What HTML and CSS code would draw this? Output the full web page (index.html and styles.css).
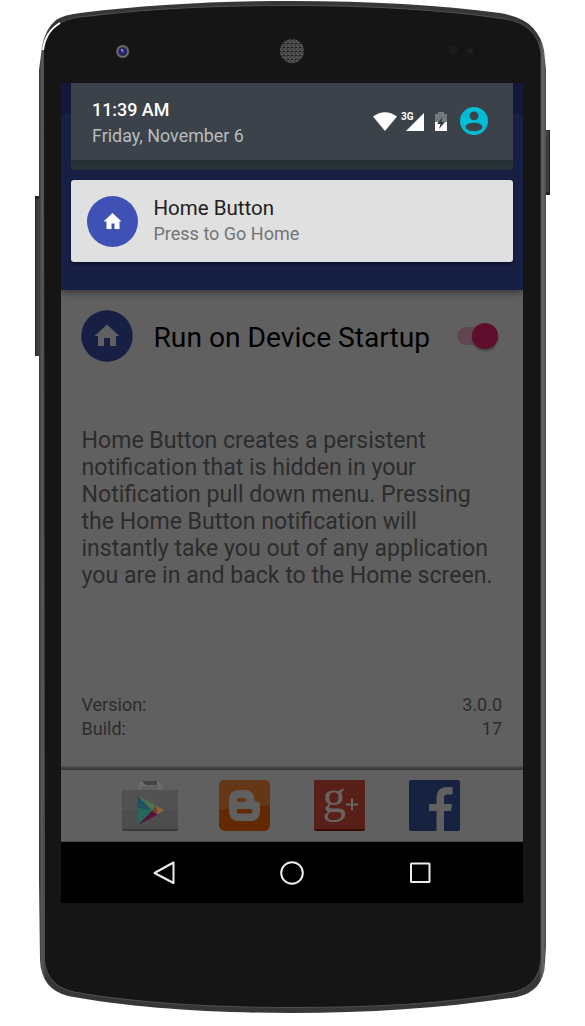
FILE: index.html
```html
<!DOCTYPE html>
<html lang="en">
<head>
<meta charset="utf-8">
<title>Home Button</title>
<link rel="stylesheet" href="styles.css">
</head>
<body>
<div class="phone">
  <svg class="shell" viewBox="0 0 585 1026" aria-hidden="true">
    <defs>
      <linearGradient id="rim" x1="0" x2="1" y1="0" y2="0"><stop offset="0" stop-color="#343638"/><stop offset=".006" stop-color="#58595b"/><stop offset=".014" stop-color="#353739"/><stop offset=".986" stop-color="#353739"/><stop offset=".994" stop-color="#666"/><stop offset="1" stop-color="#4a4a4a"/></linearGradient>
      <pattern id="mesh" width="4" height="4" patternUnits="userSpaceOnUse"><path d="M0 0H4M0 2H4M0 0V2M2 2V4" stroke="#77777a" stroke-width=".8"/></pattern>
      <radialGradient id="lens"><stop offset="0" stop-color="#5262c8"/><stop offset=".3" stop-color="#22227c"/><stop offset=".55" stop-color="#292944"/><stop offset=".75" stop-color="#77777c"/><stop offset="1" stop-color="#28282b"/></radialGradient>
    </defs>
    <path fill="#3b3d3f" d="M35 196h6v160h-6zM544 130h6v65h-6z"/>
    <path fill="#202224" d="M35 196h1v160h-1zM549 130h1v65h-1zM35 196h6v3h-6zM544 192h6v3h-6z"/>
    <path fill="url(#rim)" d="M39 70L42 47Q45 29 56 20Q63 15 80 13C145 5 216 1 292 1C370 1 440 5 500 13Q524 17 533 28Q542 38 544 50L546 70V947L545 963Q544 991 517 997C445 1008 370 1013 292 1013C214 1013 132 1008 68 996Q41 989 40 960L39 880Z"/>
    <path fill="#151515" stroke="#58595a" stroke-width=".8" d="M43.500 70V52Q46 29 62 22Q72 17 90 16C155 8 220 5.500 292 5.500C370 5.500 445 10 505 19Q537 24 541 53V958Q540 985 514 992C445 1004 370 1007.500 292 1007.500C215 1007.500 136 1003 74 992Q47 986 44.500 961Z"/>
    <path d="M43 50Q45 32 60 23" fill="none" stroke="#fff" stroke-width="2"/>
    <circle cx="122.700" cy="51.500" r="7" fill="url(#lens)"/><circle cx="122" cy="50" r="1" fill="#9cafff"/>
    <circle cx="292" cy="51" r="12.500" fill="#202021"/><circle cx="292" cy="51" r="12" fill="url(#mesh)"/>
    <circle cx="453.500" cy="50" r="5" fill="#1d1b1a"/><circle cx="470.500" cy="50" r="3" fill="#211d1a"/><circle cx="454" cy="51" r=".8" fill="#482516"/><circle cx="470.500" cy="51" r=".8" fill="#482516"/>
  </svg>

  <main class="screen">
    <div class="app-bar"></div>
    <section class="content">
      <div class="startup">
        <svg class="home-badge" viewBox="0 0 52 52"><circle cx="26" cy="26" r="25.800" fill="#181f45"/><path fill="#606060" d="M26 14.500L38.500 26H35v10h-6v-8h-6v8h-6V26h-3.500z"/></svg>
        <h1>Run on Device Startup</h1>
        <span class="toggle"><span class="thumb"></span></span>
      </div>
      <p class="description">Home Button creates a persistent<br>notification that is hidden in your<br>Notification pull down menu. Pressing<br>the Home Button notification will<br>instantly take you out of any application<br>you are in and back to the Home screen.</p>
      <dl class="about">
        <div><dt>Version:</dt><dd>3.0.0</dd></div>
        <div><dt>Build:</dt><dd>17</dd></div>
      </dl>
    </section>
    <div class="divider"></div>
    <footer class="links">
      <svg class="play" viewBox="0 0 56 52">
        <path fill="#6a6a6a" d="M16 10V5l4-4h16l4 4v5h-4V6H20v4z"/><path fill="#444" d="M20 1h15v4H24z"/>
        <path fill="#525252" d="M0 10h56v39q0 2-2 2H2q-2 0-2-2z"/><path fill="#4d4d4d" d="M0 30h56v19H0z"/><path fill="#393939" d="M0 49h56q0 2-2 2H2q-2 0-2-2z"/>
        <path fill="#1d5260" d="M15.500 15.500L31 30l-15.500 4z"/><path fill="#28685c" d="M15.500 28v17L31 30z"/><path fill="#50704e" d="M15.500 15.500L35 26l-4.500 5z"/><path fill="#8a6939" d="M35 26l7 4.500-7 4-4.500-4z"/><path fill="#71413a" d="M34 25.500l2 8-5.500-3z"/><path fill="#551437" d="M16 45l14.500-14.500 5 4z"/>
      </svg>
      <svg class="tile" viewBox="0 0 51 51"><rect width="51" height="51" rx="6" fill="#632900"/><path fill="#643817" d="M6 0h39q6 0 6 6v20Q24 25 0 30V6q0-6 6-6"/><path fill="#606060" fill-rule="evenodd" d="M21 10h5q9 0 9.500 10 .5 2 3 2 2.500 0 2.500 3v6q0 10-10 10H20q-10 0-10-10V20q0-10 11-10m-1 8q-2.500 0-2.500 2t2.500 2h5q2.500 0 2.500-2T25 18zm0 11q-2.500 0-2.500 2.200T20 33.500h11q2.500 0 2.500-2.200T31 29z"/></svg>
      <svg class="tile" viewBox="0 0 51 51"><rect width="51" height="51" rx="2" fill="#390b07"/><path fill="#591f19" d="M2 0h47q2 0 2 2v46q0 1-2 1H2q-2 0-2-1V2q0-2 2-2"/>
        <text class="google-g" x="8.500" y="32">g</text><path stroke="#686462" stroke-width="2" d="M32 24.500h12M38 18.500v12"/></svg>
      <svg class="tile" viewBox="0 0 51 51"><rect width="51" height="51" rx="2" fill="#172240"/><path fill="#606060" d="M27.500 51V31H20v-7h7.500v-6C27.500 10.500 32 7 38 7h5.500v7.500H39c-3 0-4 1-4 4V24h8l-1 7h-7v20z"/></svg>
    </footer>
    <nav class="navigation">
      <svg viewBox="0 0 26 26"><path d="M22.500 2.500v20.500L3.500 13z"/></svg>
      <svg viewBox="0 0 26 26"><circle cx="13" cy="13" r="10.800"/></svg>
      <svg viewBox="0 0 26 26"><rect x="4" y="3.500" width="18.500" height="18.500" rx=".5"/></svg>
    </nav>

    <aside class="shade">
      <header class="status">
        <div class="clock"><strong>11:39 AM</strong><span>Friday, November 6</span></div>
        <svg class="wifi" viewBox="0 0 24 19"><path fill="#fff" d="M0 4.500Q12-4 24 4.500L12 19z"/></svg>
        <div class="signal"><b>3G</b><svg viewBox="0 0 19 19"><path fill="#fff" d="M1 19L19 1v18z"/></svg></div>
        <svg class="battery" viewBox="0 0 12 19"><path fill="#747b7e" d="M0 2h3V0h6v2h3v8H0z"/><path fill="#fff" d="M0 10h12v9H0z"/><path fill="#303b42" d="M7.500 5L2 12h3.500L4 17l6-7H6.500z"/></svg>
        <svg class="avatar" viewBox="0 0 28 28"><circle cx="14" cy="14" r="14" fill="#00bcd4"/><circle cx="14" cy="8.800" r="4.400" fill="#3b4249"/><ellipse cx="14" cy="20" rx="8.500" ry="4.200" fill="#3b4249"/></svg>
      </header>
      <article class="notice">
        <svg class="notice-icon" viewBox="0 0 52 52"><circle cx="26.500" cy="26.500" r="25.500" fill="#3f51b5"/><path fill="#fff" d="M26.500 18L35.500 26.500h-2V34h-5v-5.500h-3V34h-5v-7.500h-3z"/></svg>
        <div class="notice-text"><h2>Home Button</h2><p>Press to Go Home</p></div>
      </article>
    </aside>
  </main>
</div>
</body>
</html>
```

FILE: styles.css
```css
* { box-sizing: border-box; }
body { margin: 0; background: #fff; font-family: Roboto, sans-serif; }
h1, h2, p, dl, dd { margin: 0; font-weight: 400; }
svg { display: block; flex: none; }

.phone { position: relative; width: 585px; height: 1026px; padding: 83px 62px 123px 61px; overflow: hidden; }
.shell { position: absolute; inset: 0; width: 585px; height: 1026px; }
.screen { position: relative; display: flex; flex-direction: column; width: 462px; height: 820px; background: #606060; overflow: hidden; }
.app-bar { height: 207px; flex: none; background: linear-gradient(#12173b 31px, #181f45 31px); box-shadow: 0 3px 7px rgba(0, 0, 0, .4); }

.content { height: 477px; flex: none; padding: 20px 21px 0 20.5px; }
.startup { display: flex; align-items: center; height: 52px; }
.home-badge { width: 52px; height: 52px; margin-left: -.5px; }
.startup h1 { margin-left: 20.5px; font-size: 28.2px; line-height: 36px; color: #000; white-space: nowrap; padding-top: 3px; }
.toggle { display: flex; justify-content: flex-end; align-items: center; width: 41px; height: 18px; margin-left: auto; margin-right: 4px; border-radius: 9px; background: #614752; }
.thumb { flex: none; width: 26px; height: 26px; border-radius: 50%; background: #5d0e2b; box-shadow: 0 2px 2px rgba(0, 0, 0, .3); }
.description { margin-top: 65px; font-size: 23.1px; line-height: 27px; color: #2c2c2c; white-space: nowrap; }
.about { margin-top: 104px; font-size: 18px; line-height: 24px; color: #2c2c2c; }
.about div { display: flex; justify-content: space-between; }

.divider { height: 4px; margin-top: -1px; flex: none; background: linear-gradient(#565656, #2f2f2f); }
.links { display: flex; align-items: flex-start; height: 72px; flex: none; padding: 10px 0 0 61px; border-bottom: 1px solid #484848; }
.play { width: 56px; height: 52px; margin-right: 41px; }
.tile { width: 51px; height: 51px; margin-right: 44px; overflow: visible; }
.google-g { font: 47px "Liberation Serif", serif; fill: #686462; }
.navigation { display: flex; justify-content: space-between; align-items: center; flex: 1; padding: 0 90px; background: #000; }
.navigation svg { width: 26px; height: 26px; fill: none; stroke: #eee; stroke-width: 2; stroke-linejoin: round; }

.shade { position: absolute; top: 0; left: 10px; width: 442px; }
.status { display: flex; align-items: flex-start; height: 87px; padding: 15px 25px 0 21px; background: linear-gradient(#3b4249 77px, #222d31 77px, #273236 83px); border-radius: 0 0 3px 3px; }
.clock { display: flex; flex-direction: column; width: 281px; font-size: 17.9px; line-height: 26px; }
.clock strong { font-weight: 500; line-height: 24px; color: #fff; }
.clock span { color: #b8bcbe; padding-top: 1px; }
.wifi { width: 24px; height: 19px; margin-top: 14px; }
.signal { position: relative; width: 22px; margin: 14px 0 0 5px; display: flex; justify-content: flex-end; }
.signal svg { width: 19px; height: 19px; }
.signal b { position: absolute; left: -1px; top: -1px; font-size: 10px; line-height: 12px; color: #fff; }
.battery { width: 12px; height: 19px; margin: 14px 0 0 11px; }
.avatar { width: 28px; height: 28px; margin: 9px 0 0 13px; }
.notice { display: flex; align-items: flex-start; height: 82px; margin-top: 10px; padding: 15px 15px 0; background: #e0e0e0; border-radius: 3px; box-shadow: 0 2px 3px rgba(0, 0, 0, .45); }
.notice-icon { width: 52px; height: 52px; }
.notice-text { margin-left: 15.5px; }
.notice h2 { font-size: 20.5px; line-height: 26px; color: #212121; }
.notice p { font-size: 18px; line-height: 26px; color: #737373; }
```
